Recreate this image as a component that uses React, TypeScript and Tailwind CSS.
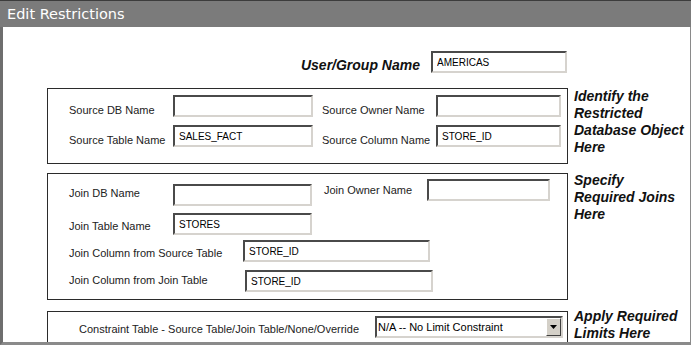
import type { ReactNode } from "react";

const INSET =
  "border-2 border-t-[#4a4a4a] border-l-[#4a4a4a] border-b-[#d6d3ce] border-r-[#d6d3ce] bg-white";

function Field({ value = "", className = "" }: { value?: string; className?: string }) {
  return (
    <input
      readOnly
      value={value}
      className={`h-[22px] shrink-0 ${INSET} px-1 py-0 text-[10px] text-black outline-none ${className}`}
    />
  );
}

function Label({ children, className = "" }: { children: ReactNode; className?: string }) {
  return (
    <span className={`shrink-0 whitespace-nowrap text-[11px] leading-[13px] text-[#222] ${className}`}>
      {children}
    </span>
  );
}

function Note({ lines, className = "" }: { lines: string[]; className?: string }) {
  return (
    <div className={`ml-[6px] whitespace-nowrap text-[14px] font-bold italic leading-[17px] text-[#111] ${className}`}>
      {lines.map((l) => (
        <div key={l}>{l}</div>
      ))}
    </div>
  );
}

function Select({ value }: { value: string }) {
  return (
    <div className={`flex h-[22px] w-[188px] shrink-0 items-stretch ${INSET}`}>
      <span className="flex-1 self-center pl-px text-[11px] leading-[13px] text-black">{value}</span>
      <span className="flex w-[15px] items-center justify-center border border-t-white border-l-white border-r-[#404040] border-b-[#404040] bg-[#d4d0c8]">
        <svg width="7" height="4" viewBox="0 0 7 4">
          <path d="M0 0h7L3.5 4z" fill="#000" />
        </svg>
      </span>
    </div>
  );
}

export default function App() {
  return (
    <div className="h-[345px] w-[692px] overflow-hidden bg-white font-['Liberation_Sans',Arial,Helvetica,sans-serif]">
      <div className="flex h-full w-[691px] flex-col">
        {/* Title bar */}
        <div className="h-[27px] shrink-0 border-t border-[#3c3c3c] bg-[#7b7b7b] pl-[7px] pt-[5px] font-['DejaVu_Sans',Verdana,sans-serif] text-[14.5px] leading-[17px] text-white">
          Edit Restrictions
        </div>

        {/* Body */}
        <div className="min-h-0 flex-1 overflow-hidden border-b-[3px] border-l-[3px] border-r border-b-[#8a8a8a] border-l-[#6e6e6e] border-r-[#8a8a8a] pl-[44px] pt-[24px]">
          <div className="flex items-start pl-[252px]">
            <span className="mt-[6px] w-[121px] text-right text-[14px] font-bold italic leading-[17px] text-[#111]">
              User/Group Name
            </span>
            <Field value="AMERICAS" className="ml-[11px] w-[136px]" />
          </div>

          {/* Restricted object */}
          <div className="mt-[14px] flex items-start">
            <div className="h-[76px] w-[521px] shrink-0 border border-[#2b2b2b] pl-[21px] pt-[6px]">
              <div className="flex items-start">
                <Label className="mt-[9px] w-[104px]">Source DB Name</Label>
                <Field className="w-[140px]" />
                <Label className="ml-[9px] mt-[9px] w-[114px]">Source Owner Name</Label>
                <Field className="w-[125px]" />
              </div>
              <div className="mt-[8px] flex items-start">
                <Label className="mt-[9px] w-[104px]">Source Table Name</Label>
                <Field value="SALES_FACT" className="w-[140px]" />
                <Label className="ml-[9px] mt-[9px] w-[114px]">Source Column Name</Label>
                <Field value="STORE_ID" className="w-[125px]" />
              </div>
            </div>
            <Note lines={["Identify the", "Restricted", "Database Object", "Here"]} />
          </div>

          {/* Joins */}
          <div className="mt-[9px] flex items-start">
            <div className="h-[127px] w-[521px] shrink-0 border border-[#2b2b2b] pl-[21px] pt-[5px]">
              <div className="flex items-start">
                <Label className="mt-[8px] w-[104px]">Join DB Name</Label>
                <Field className="mt-[5px] w-[139px]" />
                <Label className="ml-[12px] mt-[5px] w-[103px]">Join Owner Name</Label>
                <Field className="w-[123px]" />
              </div>
              <div className="mt-[7px] flex items-start">
                <Label className="mt-[7px] w-[104px]">Join Table Name</Label>
                <Field value="STORES" className="w-[139px]" />
              </div>
              <div className="mt-[5px] flex items-start">
                <Label className="mt-[7px] w-[174px]">Join Column from Source Table</Label>
                <Field value="STORE_ID" className="w-[187px]" />
              </div>
              <div className="mt-[8px] flex items-start">
                <Label className="mt-[4px] w-[176px]">Join Column from Join Table</Label>
                <Field value="STORE_ID" className="w-[188px]" />
              </div>
            </div>
            <Note lines={["Specify", "Required Joins", "Here"]} className="-mt-px" />
          </div>

          {/* Limits */}
          <div className="mt-[11px] flex items-start">
            <div className="h-[60px] w-[521px] shrink-0 border border-[#2b2b2b] pl-[31px] pt-[4px]">
              <div className="flex items-start">
                <Label className="mt-[7px] w-[296px]">Constraint Table - Source Table/Join Table/None/Override</Label>
                <Select value="N/A -- No Limit Constraint" />
              </div>
            </div>
            <Note lines={["Apply Required", "Limits Here"]} className="-mt-[3px]" />
          </div>
        </div>
      </div>
    </div>
  );
}
